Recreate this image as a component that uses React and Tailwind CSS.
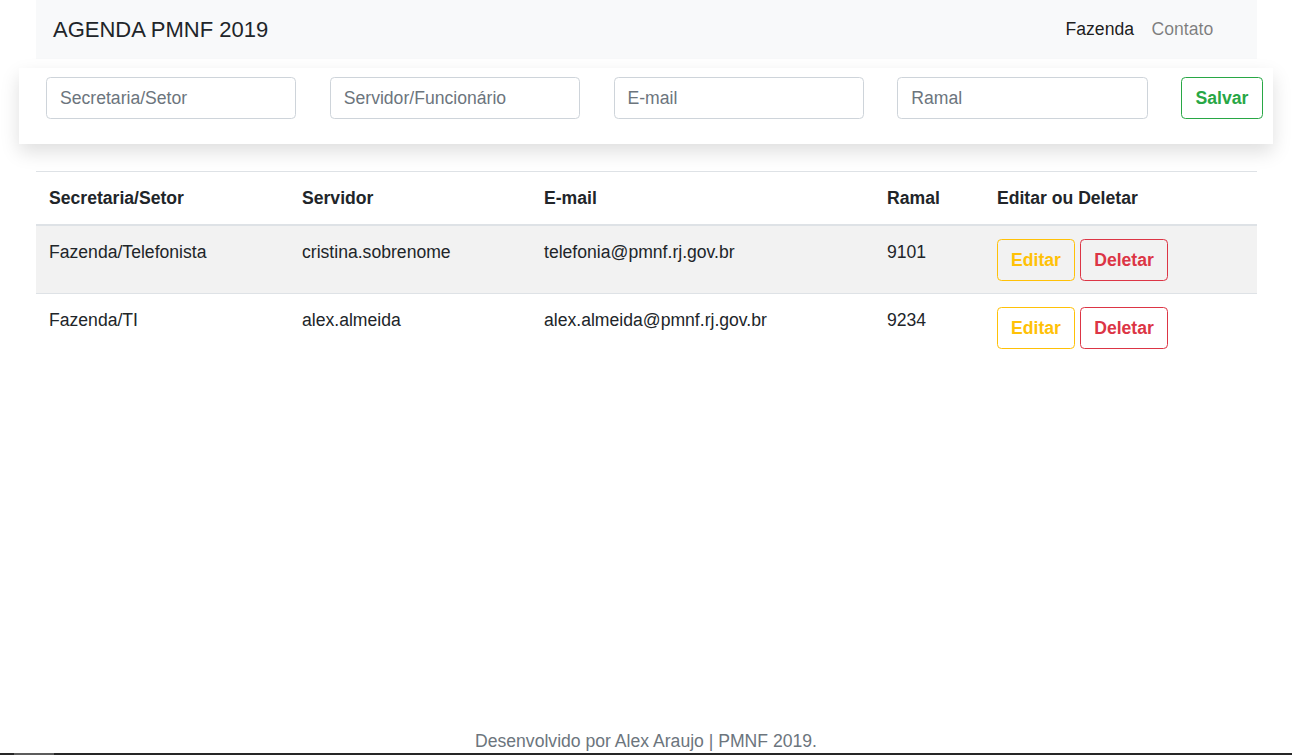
const contatos = [
  {
    setor: "Fazenda/Telefonista",
    servidor: "cristina.sobrenome",
    email: "telefonia@pmnf.rj.gov.br",
    ramal: "9101",
  },
  {
    setor: "Fazenda/TI",
    servidor: "alex.almeida",
    email: "alex.almeida@pmnf.rj.gov.br",
    ramal: "9234",
  },
];

export default function App() {
  return (
    <div
      className="flex h-[755px] flex-col bg-white text-[17.6px] leading-[26.4px] text-[#212529]"
      style={{ fontFamily: '"Liberation Sans", Arial, sans-serif' }}
    >
      <div className="flex-grow">
        {/* navbar */}
        <div className="ml-[36px] flex h-[59px] w-[1221px] items-center justify-between bg-[#f8f9fa] pl-[17px] pr-[35px]">
          <span className="text-[22px] leading-[33px] text-[#212529]">
            AGENDA PMNF 2019
          </span>
          <div className="flex">
            <span className="px-[8.8px] text-black/90">Fazenda</span>
            <span className="px-[8.8px] text-black/50">Contato</span>
          </div>
        </div>

        {/* form */}
        <form className="mx-[19px] mt-[9px] flex gap-[33.4px] bg-white pb-[25px] pl-[27px] pr-[10px] pt-[9px] shadow-[0_8px_18px_rgba(0,0,0,0.13)]">
          <input
            className="h-[42px] min-w-0 flex-1 rounded-[4.4px] border border-[#ced4da] px-[13px] placeholder:text-[#6c757d]"
            placeholder="Secretaria/Setor"
          />
          <input
            className="h-[42px] min-w-0 flex-1 rounded-[4.4px] border border-[#ced4da] px-[13px] placeholder:text-[#6c757d]"
            placeholder="Servidor/Funcionário"
          />
          <input
            className="h-[42px] min-w-0 flex-1 rounded-[4.4px] border border-[#ced4da] px-[13px] placeholder:text-[#6c757d]"
            placeholder="E-mail"
          />
          <input
            className="h-[42px] min-w-0 flex-1 rounded-[4.4px] border border-[#ced4da] px-[13px] placeholder:text-[#6c757d]"
            placeholder="Ramal"
          />
          <button
            type="button"
            className="h-[42px] w-[82px] rounded-[4.4px] border border-[#28a745] font-bold text-[#28a745]"
          >
            Salvar
          </button>
        </form>

        {/* tabela */}
        <table className="ml-[36px] mt-[27px] w-[1221px] border-collapse text-left">
          <thead>
            <tr className="border-t border-b-2 border-[#dee2e6]">
              <th className="w-[253px] px-[13px] py-[13px] font-bold">Secretaria/Setor</th>
              <th className="w-[242px] px-[13px] py-[13px] font-bold">Servidor</th>
              <th className="w-[343px] px-[13px] py-[13px] font-bold">E-mail</th>
              <th className="w-[110px] px-[13px] py-[13px] font-bold">Ramal</th>
              <th className="px-[13px] py-[13px] font-bold">Editar ou Deletar</th>
            </tr>
          </thead>
          <tbody>
            {contatos.map((c, i) => (
              <tr
                key={c.ramal}
                className={
                  "align-top " +
                  (i === 0 ? "bg-[#f2f2f2]" : "border-t border-[#dee2e6]")
                }
              >
                <td className="px-[13px] pb-[12px] pt-[13px]">{c.setor}</td>
                <td className="px-[13px] pb-[12px] pt-[13px]">{c.servidor}</td>
                <td className="px-[13px] pb-[12px] pt-[13px]">{c.email}</td>
                <td className="px-[13px] pb-[12px] pt-[13px]">{c.ramal}</td>
                <td className="px-[13px] pb-[12px] pt-[13px]">
                  <div className="flex gap-[5px]">
                    <button
                      type="button"
                      className="h-[42px] w-[78px] rounded-[4.4px] border border-[#ffc107] font-bold text-[#ffc107]"
                    >
                      Editar
                    </button>
                    <button
                      type="button"
                      className="h-[42px] w-[88px] rounded-[4.4px] border border-[#dc3545] font-bold text-[#dc3545]"
                    >
                      Deletar
                    </button>
                  </div>
                </td>
              </tr>
            ))}
          </tbody>
        </table>
      </div>

      <footer className="text-center leading-[24px] text-[#6c757d]">
        Desenvolvido por Alex Araujo | PMNF 2019.
      </footer>
      <div className="h-[2px] bg-[#262626] pl-[14px]">
        <div className="h-[2px] w-[40px] bg-[#5c5c5c]"></div>
      </div>
    </div>
  );
}
